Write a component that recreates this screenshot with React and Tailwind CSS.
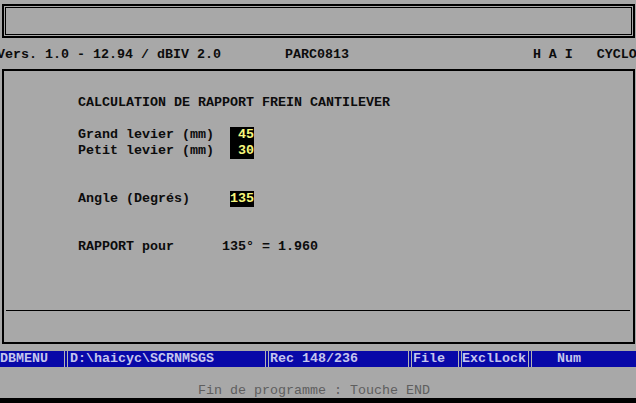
export default function App() {
  const mono = "font-['Liberation_Mono',monospace] text-[13.33px] leading-[16px] font-bold";

  const sep = <div className="w-[4px] h-full border-x border-[#b4b4b4]" />;

  return (
    <div className={`w-[636px] h-[403px] overflow-hidden bg-[#a8a8a8] text-[#0c0c0c] flex flex-col ${mono}`}>
      {/* top frame */}
      <div className="mt-[4px] ml-[2px] mr-[1px] h-[34px] border-2 border-black p-[1px]">
        <div className="h-full border border-black" />
      </div>

      {/* version line */}
      <div className="mt-[9px] -ml-[3px] h-[16px] whitespace-pre">
        {"Vers. 1.0 - 12.94 / dBIV 2.0        PARC0813                       H A I   CYCLO"}
      </div>

      {/* main panel */}
      <div className="mt-[6px] ml-[2px] mr-[1px] h-[275px] border-2 border-black flex flex-col">
        <div className="pt-[24px] pl-[74px]">
          <div className="whitespace-pre">CALCULATION DE RAPPORT FREIN CANTILEVER</div>

          <div className="mt-[16px] flex">
            <div className="w-[152px] whitespace-pre">
              <div>Grand levier (mm)</div>
              <div>Petit levier (mm)</div>
            </div>
            <div className="w-[24px] bg-black text-[#f6f67c] text-right">
              <div>45</div>
              <div>30</div>
            </div>
          </div>

          <div className="mt-[32px] flex">
            <div className="w-[152px] whitespace-pre">Angle (Degrés)</div>
            <div className="w-[24px] bg-black text-[#f6f67c] text-right">135</div>
          </div>

          <div className="mt-[32px] whitespace-pre">{"RAPPORT pour      135° = 1.960"}</div>
        </div>

        <div className="mt-[55px] ml-[2px] mr-[3px] h-px bg-black" />
      </div>

      {/* status bar */}
      <div className="mt-[7px] h-[16px] bg-[#0808a8] text-[#c4c4ee] flex items-center whitespace-pre">
        <div className="w-[64px]">DBMENU</div>
        {sep}
        <div className="w-[197px] pl-[2px]">D:\haicyc\SCRNMSGS</div>
        {sep}
        <div className="w-[139px] pl-[1px]">Rec 148/236</div>
        {sep}
        <div className="w-[46px] pl-[1px]">File</div>
        {sep}
        <div className="w-[66px]">ExclLock</div>
        {sep}
        <div className="flex-1 pl-[25px]">Num</div>
      </div>

      {/* message line */}
      <div className="h-[31px] pt-[16px] pl-[198px] whitespace-pre font-normal text-[#5e5e5e]">
        Fin de programme : Touche END
      </div>

      <div className="flex-1 bg-black" />
    </div>
  );
}
